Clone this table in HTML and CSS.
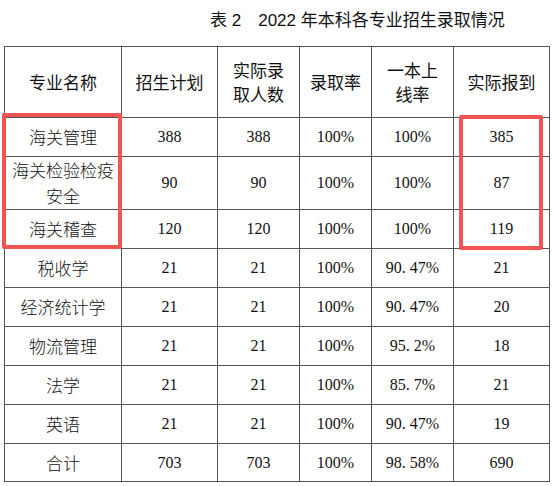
FILE: index.html
```html
<!DOCTYPE html>
<html lang="zh-CN">
<head>
    <meta charset="UTF-8">
    <meta name="viewport" content="width=device-width, initial-scale=1.0">
    <title>2022年本科各专业招生录取情况</title>
    <link rel="stylesheet" href="styles.css">
</head>
<body>
    <div class="page">
        <div class="caption">表 2　2022 年本科各专业招生录取情况</div>
        <table class="stats">
            <colgroup>
                <col class="c-name">
                <col class="c-plan">
                <col class="c-admit">
                <col class="c-rate">
                <col class="c-first">
                <col class="c-report">
            </colgroup>
            <thead>
                <tr>
                    <th>专业名称</th>
                    <th>招生计划</th>
                    <th>实际录<br>取人数</th>
                    <th>录取率</th>
                    <th>一本上<br>线率</th>
                    <th>实际报到</th>
                </tr>
            </thead>
            <tbody>
                <tr>
                    <td class="name">海关管理</td>
                    <td>388</td><td>388</td><td>100%</td><td>100%</td><td>385</td>
                </tr>
                <tr class="tall">
                    <td class="name">海关检验检疫<br>安全</td>
                    <td>90</td><td>90</td><td>100%</td><td>100%</td><td>87</td>
                </tr>
                <tr>
                    <td class="name">海关稽查</td>
                    <td>120</td><td>120</td><td>100%</td><td>100%</td><td>119</td>
                </tr>
                <tr>
                    <td class="name">税收学</td>
                    <td>21</td><td>21</td><td>100%</td><td>90. 47%</td><td>21</td>
                </tr>
                <tr>
                    <td class="name">经济统计学</td>
                    <td>21</td><td>21</td><td>100%</td><td>90. 47%</td><td>20</td>
                </tr>
                <tr>
                    <td class="name">物流管理</td>
                    <td>21</td><td>21</td><td>100%</td><td>95. 2%</td><td>18</td>
                </tr>
                <tr>
                    <td class="name">法学</td>
                    <td>21</td><td>21</td><td>100%</td><td>85. 7%</td><td>21</td>
                </tr>
                <tr>
                    <td class="name">英语</td>
                    <td>21</td><td>21</td><td>100%</td><td>90. 47%</td><td>19</td>
                </tr>
                <tr class="short">
                    <td class="name">合计</td>
                    <td>703</td><td>703</td><td>100%</td><td>98. 58%</td><td>690</td>
                </tr>
            </tbody>
        </table>

        <!-- highlight boxes drawn over the table -->
        <div class="mark mark-left"></div>
        <div class="mark mark-right"></div>
    </div>
</body>
</html>
```

FILE: styles.css
```css
body {
    margin: 0;
    background: #fff;
    color: #111;
    font-family: "Liberation Serif", "Noto Sans CJK SC", serif;
}

.page {
    position: relative;
    width: 553px;
    height: 486px;
    overflow: hidden;
}

.caption {
    height: 46px;
    padding-left: 210px;
    line-height: 42px;
    font-family: "Liberation Sans", "Noto Sans CJK SC", sans-serif;
    font-size: 17px;
    color: #111;
}

.stats {
    margin-left: 4px;
    border-collapse: collapse;
    table-layout: fixed;
    width: 545px;
}

.c-name { width: 117px; }
.c-plan { width: 96px; }
.c-admit { width: 82px; }
.c-rate { width: 72px; }
.c-first { width: 82px; }
.c-report { width: 96px; }

.stats th,
.stats td {
    border: 1px solid #555;
    padding: 0;
    text-align: center;
    vertical-align: middle;
}

.stats th {
    height: 70px;
    font-family: "Noto Sans CJK SC", sans-serif;
    font-weight: normal;
    font-size: 17px;
    line-height: 24px;
}

.stats td {
    height: 38px;
    font-size: 16px;
    line-height: 26px;
}

.stats td.name {
    font-family: "Noto Sans CJK SC", sans-serif;
    font-size: 17px;
    font-weight: 300;
}

.stats tr.tall td {
    height: 51px;
}

.stats tr.short td {
    height: 37px;
}

.mark {
    position: absolute;
    border: 4px solid #f25454;
    border-radius: 2px;
    box-sizing: border-box;
}

.mark-left {
    left: 2px;
    top: 113px;
    width: 120px;
    height: 136px;
}

.mark-right {
    left: 459px;
    top: 115px;
    width: 84px;
    height: 135px;
}
```
